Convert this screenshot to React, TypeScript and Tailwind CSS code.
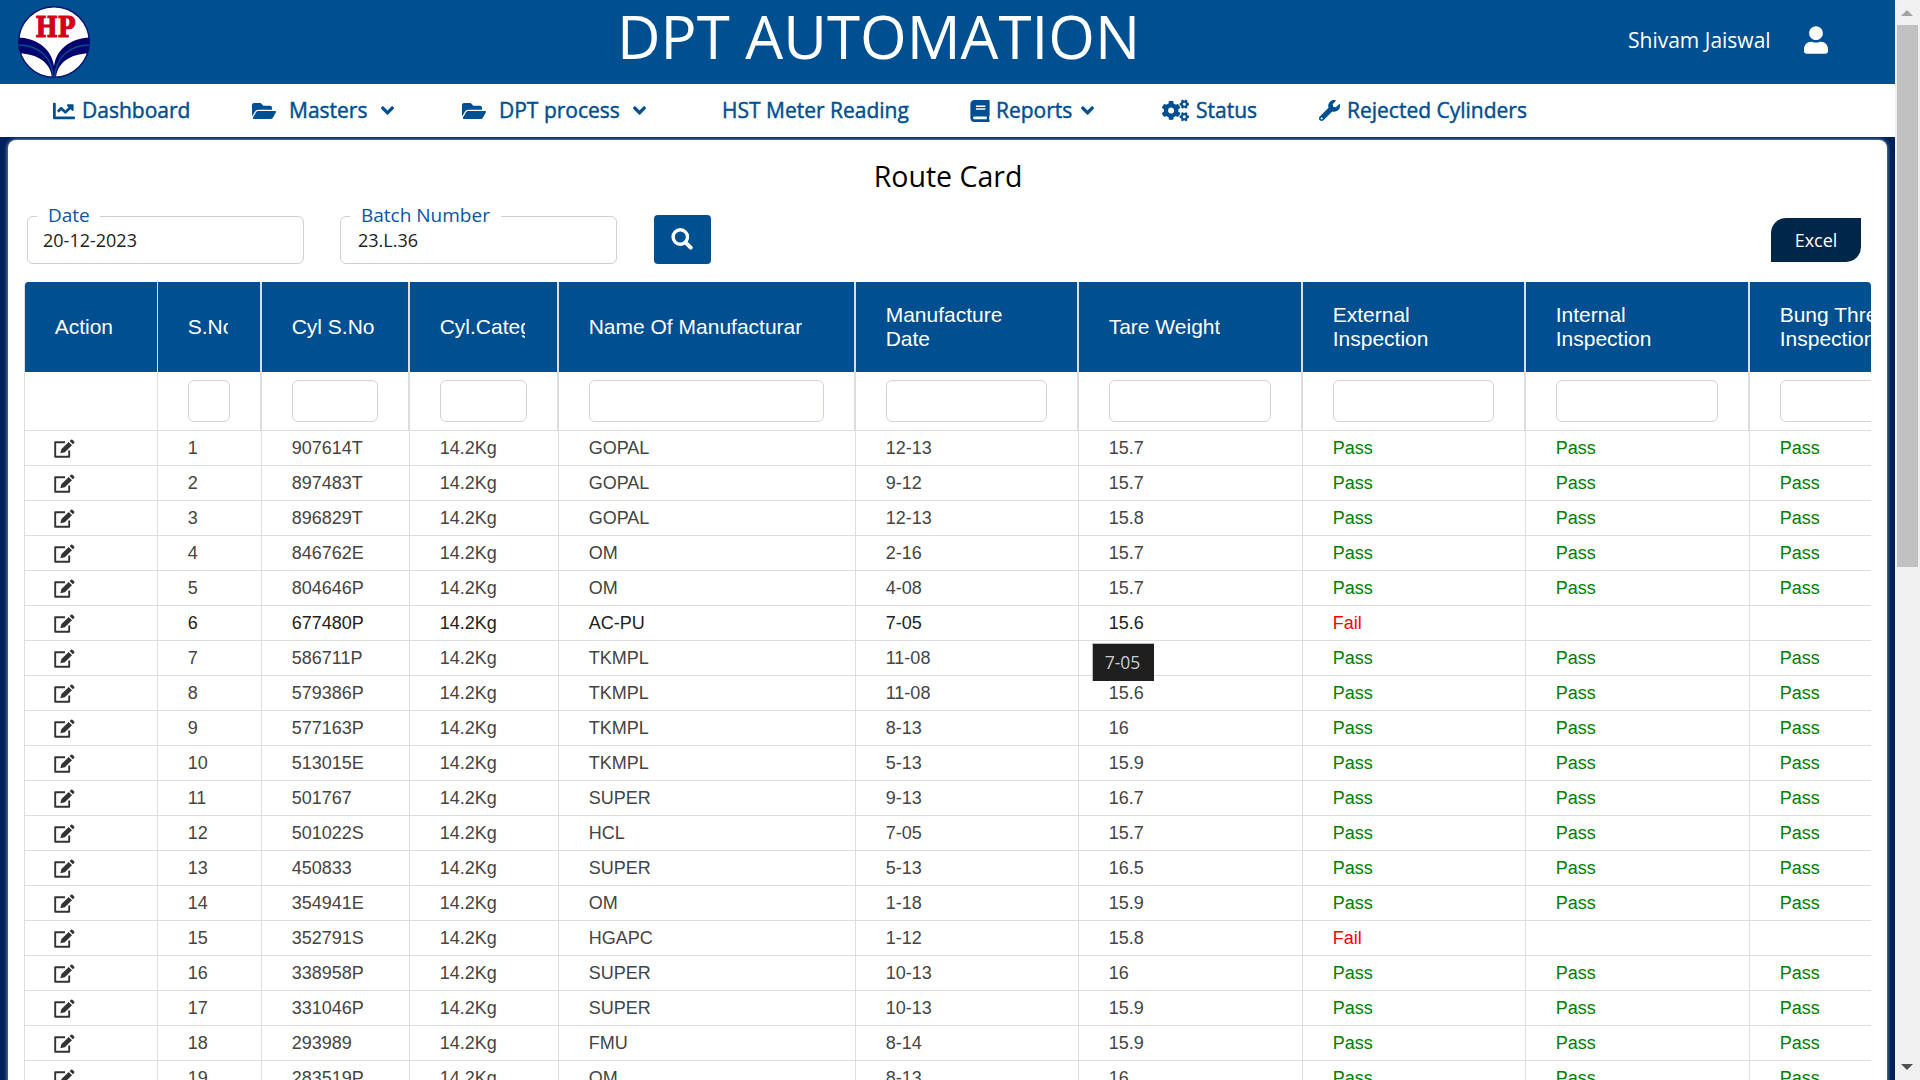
import React from "react";
import {
  FaAngleDown,
  FaBook,
  FaChartLine,
  FaCogs,
  FaFolderOpen,
  FaUser,
  FaWrench,
} from "react-icons/fa";

type Row = [string, string, string, string, boolean];

const rows: Row[] = [
  ["907614T", "GOPAL", "12-13", "15.7", true],
  ["897483T", "GOPAL", "9-12", "15.7", true],
  ["896829T", "GOPAL", "12-13", "15.8", true],
  ["846762E", "OM", "2-16", "15.7", true],
  ["804646P", "OM", "4-08", "15.7", true],
  ["677480P", "AC-PU", "7-05", "15.6", false],
  ["586711P", "TKMPL", "11-08", "15.6", true],
  ["579386P", "TKMPL", "11-08", "15.6", true],
  ["577163P", "TKMPL", "8-13", "16", true],
  ["513015E", "TKMPL", "5-13", "15.9", true],
  ["501767", "SUPER", "9-13", "16.7", true],
  ["501022S", "HCL", "7-05", "15.7", true],
  ["450833", "SUPER", "5-13", "16.5", true],
  ["354941E", "OM", "1-18", "15.9", true],
  ["352791S", "HGAPC", "1-12", "15.8", false],
  ["338958P", "SUPER", "10-13", "16", true],
  ["331046P", "SUPER", "10-13", "15.9", true],
  ["293989", "FMU", "8-14", "15.9", true],
  ["283519P", "OM", "8-13", "16", true],
];

const headers = [
  "Action",
  "S.No",
  "Cyl S.No",
  "Cyl.Category",
  "Name Of Manufacturar",
  "Manufacture Date",
  "Tare Weight",
  "External Inspection",
  "Internal Inspection",
  "Bung Thread Inspection",
];

const gridCols =
  "grid w-[1949px] grid-cols-[133px_104px_148px_149px_297px_223px_224px_223px_224px_224px]";

function NavItem({
  icon,
  label,
  arrow,
  className,
  labelClass,
}: {
  icon?: React.ReactNode;
  label: string;
  arrow?: boolean;
  className: string;
  labelClass: string;
}) {
  return (
    <div className={"flex shrink-0 items-center whitespace-nowrap " + className}>
      {icon}
      <span className={"[-webkit-text-stroke:0.45px_#004f91] " + labelClass}>{label}</span>
      {arrow && <FaAngleDown className="-ml-1 size-[21px]" />}
    </div>
  );
}

function Logo() {
  return (
    <svg viewBox="0 0 72 72" className="ml-[18px] mt-1.5 size-[72px] shrink-0">
      <defs>
        <clipPath id="disc">
          <circle cx="36" cy="36" r="35.6" />
        </clipPath>
      </defs>
      <circle cx="36" cy="36" r="35.3" fill="#fff" stroke="#0a1172" strokeWidth="1.4" />
      <g clipPath="url(#disc)">
        <path d="M0 31.500C17 32 33 41 36 60C39 41 55 32 72 31.500V47.500C54 47 39 56 38 72H34C33 56 18 47 0 47.500Z" fill="#04046e" />
        <path d="M0 39C19 39 34.800 50 35.200 72M72 39C53 39 37.200 50 36.800 72" fill="none" stroke="#004f91" strokeWidth="1.300" />
      </g>
      <text x="37.500" y="31" textAnchor="middle" textLength="40" lengthAdjust="spacingAndGlyphs" fontFamily="DejaVu Serif" fontWeight="700" fontSize="27" fill="#d0021b" stroke="#d0021b" strokeWidth="1.2">
        HP
      </text>
    </svg>
  );
}

function SearchIcon() {
  return (
    <svg viewBox="0 0 22 22" className="size-[22px]" fill="none" stroke="currentColor">
      <circle cx="9.300" cy="9" r="7.200" strokeWidth="3.400" />
      <path d="M14.500 14.300L19.700 19.600" strokeWidth="4" strokeLinecap="round" />
    </svg>
  );
}

function EditIcon() {
  return (
    <svg viewBox="0 0 21 19" className="mt-2 h-[19px] w-[21px]" fill="#333">
      <path d="M11 3.200H1.200V17.800H15.200V11.500" fill="none" stroke="#333" strokeWidth="1.900" strokeLinejoin="round" />
      <path d="M6.300 14.300L7.500 9.900L14.700 2.900L18 6.200L10.800 13.200Z" />
      <path d="M15.600 2L17 .700Q17.700 .200 18.400 .800L20.200 2.600Q20.700 3.300 20.200 4L18.900 5.300Z" />
    </svg>
  );
}

function Field({
  label,
  value,
  className,
  legendClass,
  valueClass,
}: {
  label: string;
  value: string;
  className: string;
  legendClass: string;
  valueClass: string;
}) {
  return (
    <fieldset className={"h-[57px] w-[277px] rounded-md border border-[#cfcfcf] " + className}>
      <legend className={"ml-[9px] h-[18px] whitespace-nowrap pl-[11px] text-[19px] leading-[16px] text-[#0a55a0] " + legendClass}>
        {label}
      </legend>
      <div className={"pt-[3px] text-[18px] leading-6 text-[#222] " + valueClass}>{value}</div>
    </fieldset>
  );
}

export default function App() {
  return (
    <div className="flex h-[1080px] w-[1920px] overflow-hidden bg-white font-['Open_Sans',sans-serif]">
      <div className="flex h-full w-[1895px] shrink-0 flex-col bg-[#00205b]">
        <header className="flex h-[84px] shrink-0 bg-[#004f91] text-white">
          <Logo />
          <h1 className="ml-[524px] w-[560px] whitespace-nowrap pl-[3px] text-[60px] leading-[72px]">DPT AUTOMATION</h1>
          <span className="ml-[454px] w-[176px] whitespace-nowrap text-[21px] leading-[81px]">Shivam Jaiswal</span>
          <FaUser className="mt-[26px] h-7 w-6" />
        </header>

        <nav className="flex h-[53px] shrink-0 items-center bg-white pl-[53px] text-[21px] text-[#004f91]">
          <NavItem className="w-[199px]" icon={<FaChartLine className="size-[22px]" />} label="Dashboard" labelClass="ml-[7px]" />
          <NavItem className="w-[210px]" icon={<FaFolderOpen className="size-6" />} label="Masters" labelClass="ml-[13px] w-[92px]" arrow />
          <NavItem className="w-[260px]" icon={<FaFolderOpen className="size-6" />} label="DPT process" labelClass="ml-[13px] w-[134px]" arrow />
          <NavItem className="w-[248px]" label="HST Meter Reading" labelClass="" />
          <NavItem className="w-[192px]" icon={<FaBook className="h-[22px] w-5" />} label="Reports" labelClass="ml-[6px] w-[85px]" arrow />
          <NavItem className="w-[157px]" icon={<FaCogs className="size-[27px]" />} label="Status" labelClass="ml-[7px]" />
          <NavItem className="" icon={<FaWrench className="size-[21px]" />} label="Rejected Cylinders" labelClass="ml-[7px]" />
        </nav>

        <main className="mx-2 mt-[3px] flex h-[960px] w-[1879px] shrink-0 flex-col rounded-t-lg bg-white shadow-[0_0_4px_#9fb4d0]">
          <h2 className="mt-4 h-10 pl-px text-center text-[28.5px] leading-10 text-black">Route Card</h2>

          <div className="mt-[11px] flex h-[75px] pl-[19px]">
            <Field label="Date" value="20-12-2023" className="" legendClass="w-[63px]" valueClass="pl-[15px]" />
            <Field label="Batch Number" value="23.L.36" className="ml-9" legendClass="w-[151px]" valueClass="pl-[17px]" />
            <button className="ml-[37px] mt-2 flex h-[49px] w-[57px] items-center justify-center rounded bg-[#004f91] pb-px pr-px text-white">
              <SearchIcon />
            </button>
            <button className="ml-[1060px] mt-[11px] h-11 w-[90px] rounded-br-[15px] rounded-tl-[15px] bg-[#002649] text-[18px] text-white">
              Excel
            </button>
          </div>

          <div className="ml-4 w-[1847px] overflow-hidden rounded-t border-l border-[#ddd] font-['Liberation_Sans',sans-serif]">
            <div className={gridCols + " h-[90px] bg-[#004f91] text-[21px] leading-6 text-white"}>
              {headers.map((h, i) => (
                <div
                  key={h}
                  className={
                    "flex items-center border-[#ddd] pl-[29.7px] pr-[32px] " + (i === 0 ? "border-r" : "border-r-2")
                  }
                >
                  <div className={"overflow-hidden " + (i < 5 ? "whitespace-nowrap" : "")}>{h}</div>
                </div>
              ))}
            </div>
            <div className={gridCols + " h-[59px] border-b border-[#ddd]"}>
              {headers.map((h, i) => (
                <div key={h} className={"border-[#ddd] px-[30px] pt-2 " + (i === 0 ? "border-r" : "border-r-2")}>
                  {i > 0 && <div className="h-[42px] rounded-md border border-[#ced4da]" />}
                </div>
              ))}
            </div>
            {rows.map(([cyl, maker, date, weight, pass], r) => {
              const later = pass ? "Pass" : "";
              const cells = [
                <EditIcon key="edit" />,
                String(r + 1),
                cyl,
                "14.2Kg",
                maker,
                date,
                weight,
                pass ? "Pass" : "Fail",
                later,
                later,
              ];
              return (
                <div
                  key={cyl}
                  className={gridCols + " h-[35px] border-b border-[#ddd] text-[18px] leading-[34px] " + (r === 5 ? "text-[#212121]" : "text-[#444]")}
                >
                  {cells.map((c, i) => (
                    <div
                      key={i}
                      className={
                        "relative border-r border-[#ddd] " +
                        (i === 0 ? "pl-[29px] " : "pl-[29.7px] ") +
                        (i < 7 ? "" : pass ? "text-[#008000]" : "text-[#ff0000]")
                      }
                    >
                      {c}
                      {r === 5 && i === 6 && (
                        <div className="absolute left-[13px] top-[37px] z-10 h-[38px] w-[62px] border-l border-t border-[#bbb] bg-[#1f1f1f] pr-0.5 text-center font-['Open_Sans',sans-serif] text-[17.5px] leading-[37px] text-[#ccc]">
                          7-05
                        </div>
                      )}
                    </div>
                  ))}
                </div>
              );
            })}
          </div>
        </main>
      </div>

      <div className="flex h-full w-[25px] shrink-0 flex-col items-center bg-[#f0f0f0] pr-px">
        <div className="flex h-[25px] shrink-0 items-center pt-px">
          <svg viewBox="0 0 12 6" className="h-1.5 w-3">
            <path d="M6 0L12 6H0Z" fill="#a3a3a3" />
          </svg>
        </div>
        <div className="h-[542px] w-[21px] shrink-0 bg-[#c1c1c1]" />
        <svg viewBox="0 0 12 6" className="mb-[10px] mt-auto h-1.5 w-3">
          <path d="M0 0H12L6 6Z" fill="#505050" />
        </svg>
      </div>
    </div>
  );
}
